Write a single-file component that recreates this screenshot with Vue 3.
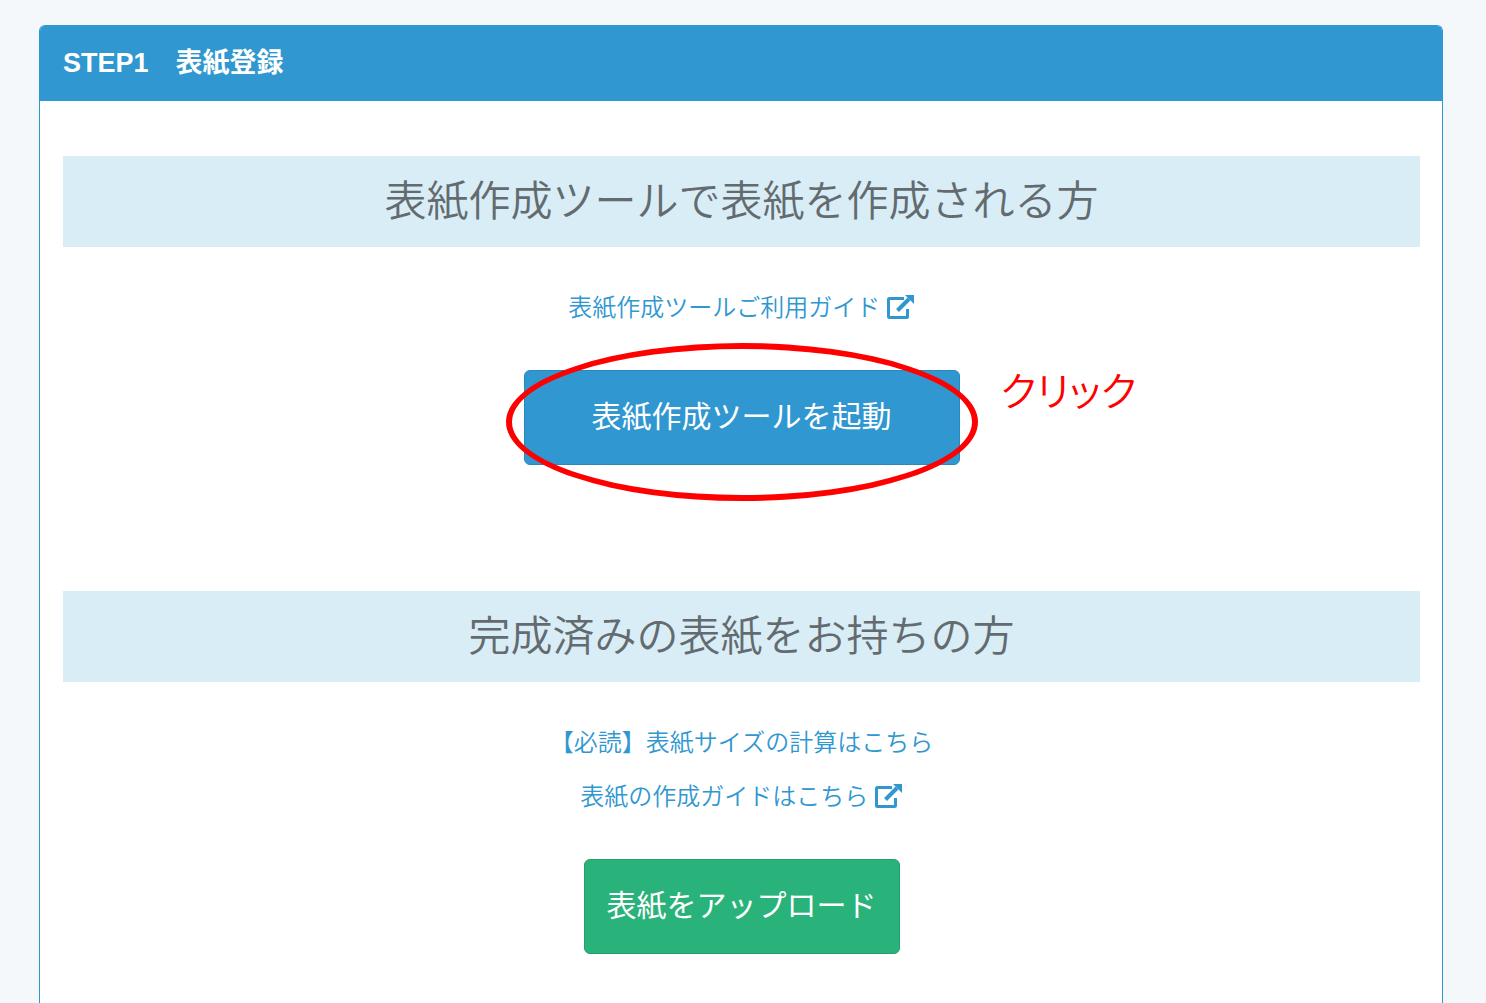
<template>
  <main class="page">
    <section class="panel">
      <header class="panel-header">
        <h1>STEP1　表紙登録</h1>
      </header>

      <div class="panel-body">
        <!-- Cover tool -->
        <section class="block">
          <h2 class="block-title">表紙作成ツールで表紙を作成される方</h2>
          <div class="links">
            <a href="#guide">
              表紙作成ツールご利用ガイド
              <svg class="icon" viewBox="0 0 28 26" aria-hidden="true">
                <path d="M17 4.5H2.5q-1 0-1 1v17q0 1 1 1h17q1 0 1-1V15" />
                <path class="arrow-line" d="M10.5 16.5L22 5" />
                <path class="arrow-head" d="M18 1H27v9z" />
              </svg>
            </a>
          </div>
          <div class="action">
            <button type="button" class="btn btn-primary">表紙作成ツールを起動</button>
            <span class="ring"></span>
            <span class="ring-note">クリック</span>
          </div>
        </section>

        <!-- Upload of a finished cover -->
        <section class="block">
          <h2 class="block-title">完成済みの表紙をお持ちの方</h2>
          <div class="links">
            <a href="#size">【必読】表紙サイズの計算はこちら</a>
            <a href="#cover-guide">
              表紙の作成ガイドはこちら
              <svg class="icon" viewBox="0 0 28 26" aria-hidden="true">
                <path d="M17 4.5H2.5q-1 0-1 1v17q0 1 1 1h17q1 0 1-1V15" />
                <path class="arrow-line" d="M10.5 16.5L22 5" />
                <path class="arrow-head" d="M18 1H27v9z" />
              </svg>
            </a>
          </div>
          <div class="action">
            <button type="button" class="btn btn-success">表紙をアップロード</button>
          </div>
        </section>
      </div>
    </section>
  </main>
</template>

<script setup>
</script>

<style>
body {
  margin: 0;
  background: #f4f8fb;
}
</style>

<style scoped>
.page {
  padding: 25px 43px 0 39px;
  font-family: "Liberation Sans", "Noto Sans CJK JP", sans-serif;
  color: #636b6f;
}

.panel {
  overflow: hidden;
  background: #fff;
  border: 1px solid #3097d1;
  border-bottom: 0;
  border-radius: 6px 6px 0 0;
}

.panel-header {
  padding: 17px 23px 18px;
  background: #3097d1;
  color: #fff;
}

.panel-header h1 {
  margin: 0;
  font-size: 27px;
  line-height: 40px;
  font-weight: 700;
}

.panel-body {
  padding: 55px 22px 49px 23px;
}

.block + .block {
  margin-top: 126px;
}

.block-title {
  margin: 0;
  padding: 14px 0;
  background: #d9edf7;
  font-size: 42px;
  line-height: 63px;
  font-weight: 350;
  text-align: center;
}

.links {
  display: flex;
  flex-direction: column;
  align-items: center;
  gap: 18px;
  margin: 43px 0 44px;
}

.links a {
  color: #3097d1;
  font-size: 24px;
  line-height: 36px;
  font-weight: 350;
  text-decoration: none;
}

.icon {
  width: 28px;
  height: 26px;
  vertical-align: -4px;
  fill: none;
  stroke: #3097d1;
  stroke-width: 3;
}

.icon .arrow-line {
  stroke-width: 4;
}

.icon .arrow-head {
  fill: #3097d1;
  stroke: none;
}

.action {
  position: relative;
  width: fit-content;
  margin: 0 auto;
}

.btn {
  display: block;
  border: 1px solid;
  border-radius: 6px;
  color: #fff;
  font-family: inherit;
  font-size: 30px;
  line-height: 45px;
  cursor: pointer;
}

.btn-primary {
  padding: 23px 67px 25px;
  background: #3097d1;
  border-color: #2a88bd;
}

.btn-success {
  padding: 23px 22px 25px;
  background: #2ab27b;
  border-color: #259d6d;
}

/* Hand-marked callout over the launch button */
.ring {
  position: absolute;
  inset: -27px -18px -36px;
  border: 6px solid #f00;
  border-radius: 50%;
  pointer-events: none;
}

.ring-note {
  position: absolute;
  top: -6px;
  left: calc(100% + 41px);
  color: #f00;
  font-size: 40px;
  line-height: 57px;
  font-weight: 350;
  font-feature-settings: "palt";
  white-space: nowrap;
}
</style>
